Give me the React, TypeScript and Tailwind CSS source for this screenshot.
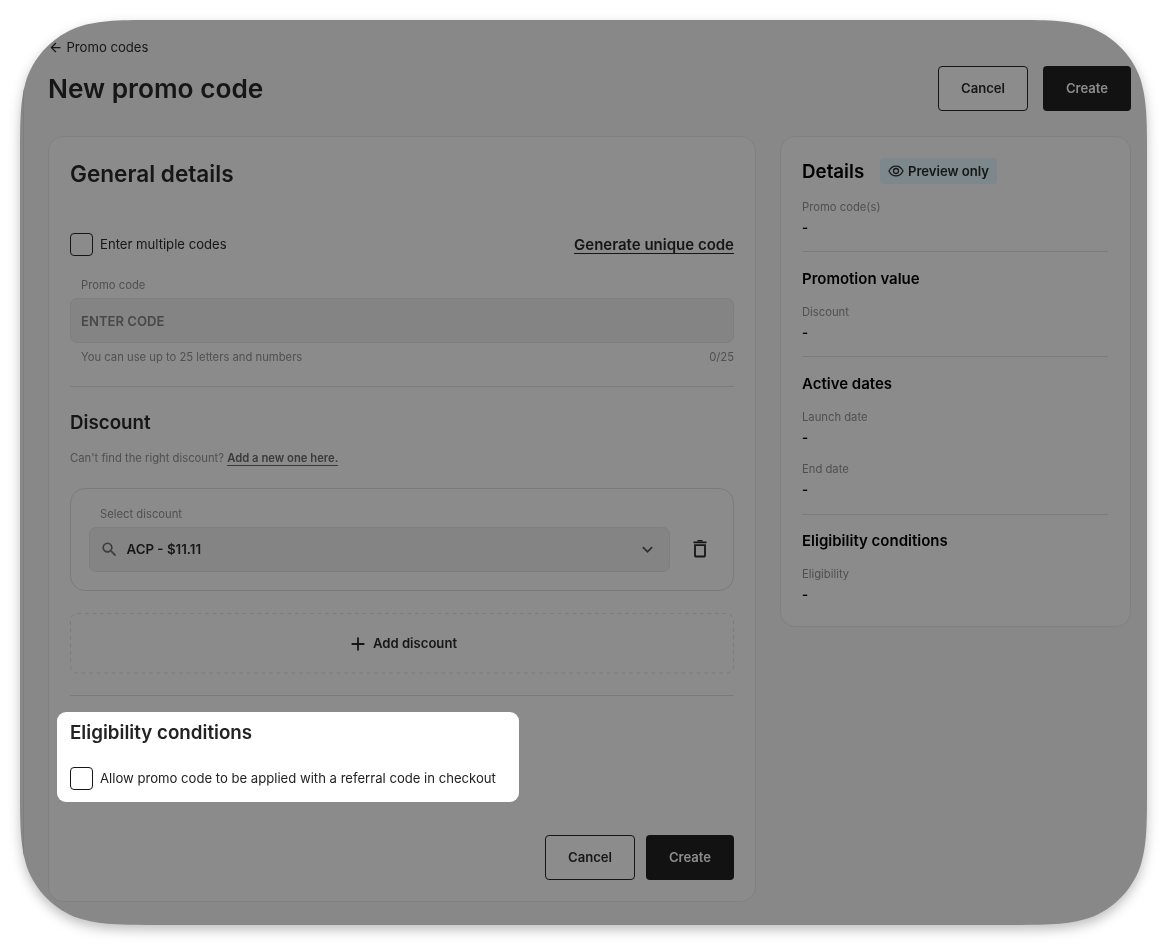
import type { ReactNode } from 'react';
import { MdAdd, MdArrowBack, MdExpandMore, MdSearch } from 'react-icons/md';

type Field = { label: string; value: string };
type Section = { title: string; fields: Field[] };

const sections: Section[] = [
  { title: 'Promotion value', fields: [{ label: 'Discount', value: '-' }] },
  { title: 'Active dates', fields: [{ label: 'Launch date', value: '-' }, { label: 'End date', value: '-' }] },
  { title: 'Eligibility conditions', fields: [{ label: 'Eligibility', value: '-' }] },
];

function EyeIcon() {
  return (
    <svg viewBox="0 0 16 12" className="h-3 w-4" fill="none" stroke="#1a1a1a" strokeWidth="1.3">
      <path d="M1 6C2.4 2.9 4.9 1.1 8 1.1s5.6 1.8 7 4.9c-1.4 3.1-3.9 4.9-7 4.9S2.4 9.1 1 6Z" />
      <circle cx="8" cy="6" r="2.5" />
    </svg>
  );
}

function TrashIcon() {
  return (
    <svg viewBox="0 0 14 18" className="mb-[2px] ml-[23px] h-[18px] w-[14px]" fill="none" stroke="#161616">
      <path d="M4.5 0.8h5" strokeWidth="1.4" />
      <path d="M0.5 2.3h13" strokeWidth="1.8" />
      <path d="M2 5.2h10v10.6a0.7 0.7 0 0 1-0.7 0.7H2.7A0.7 0.7 0 0 1 2 15.8Z" strokeWidth="1.8" />
    </svg>
  );
}

function Buttons({ className }: { className: string }) {
  return (
    <div className={`flex ${className}`}>
      <button className="h-[45px] w-[90px] rounded-[4px] border border-[#161616] bg-[#8c8c8c] text-[13.125px] font-semibold text-[#161616]">Cancel</button>
      <button className="h-[45px] w-[88px] rounded-[4px] bg-[#121212] text-[13.125px] font-semibold text-[#8c8c8c]">Create</button>
    </div>
  );
}

function Checkbox({ children }: { children: ReactNode }) {
  return (
    <label className="flex h-[23px] items-center gap-[7px] text-[13.125px] whitespace-nowrap">
      <span className="size-[23px] rounded-[4px] border border-[#161616]" />
      {children}
    </label>
  );
}

function FieldRow({ label, value }: Field) {
  return (
    <div className="h-[52.5px]">
      <div className="h-4 text-[11.25px] leading-4 text-[#505050]">{label}</div>
      <div className="mt-1 h-4 text-[13.125px] leading-4 font-semibold">{value}</div>
    </div>
  );
}

function PreviewCard() {
  return (
    <aside className="h-[491px] w-[351px] rounded-[15px] border border-[#808080] bg-[#8b8b8b] pr-[22px] pl-[21px] pt-[21px] text-black">
      <div className="flex h-[26px] items-center">
        <h2 className="w-[78px] pt-[2px] text-[18.75px] leading-6 font-semibold">Details</h2>
        <span className="flex h-[26px] w-[117px] items-center justify-center gap-1 rounded-[4px] bg-[#7c888b] text-[13.125px] font-semibold text-[#161616]">
          <EyeIcon />
          <span className="pt-px">Preview only</span>
        </span>
      </div>
      <div className="mt-[14.5px]">
        <FieldRow label="Promo code(s)" value="-" />
      </div>
      {sections.map((s) => (
        <section key={s.title} className="border-t border-[#7b7b7b] pt-[16.5px]">
          <h3 className="mb-[15px] h-5 text-[15px] leading-5 font-semibold">{s.title}</h3>
          {s.fields.map((f) => (
            <FieldRow key={f.label} {...f} />
          ))}
        </section>
      ))}
    </aside>
  );
}

function PromoForm() {
  return (
    <main className="h-[766px] w-[708px] rounded-[15px] border border-[#808080] bg-[#8b8b8b] px-[21px] pt-[22px]">
      <h2 className="h-[29px] text-[22.6px] leading-[29px] font-semibold">General details</h2>
      <div className="mt-[45px] flex items-center justify-between">
        <Checkbox>Enter multiple codes</Checkbox>
        <a className="border-b border-[#161616] text-[15px] leading-[17px] font-semibold">Generate unique code</a>
      </div>
      <div className="mt-[21px] pl-[11px] text-[11.25px] leading-4 text-[#505050]">Promo code</div>
      <div className="mt-[5px] flex h-[45px] items-center rounded-[7px] border border-[#7e7e7e] bg-[#848484] pt-[2px] pl-[10px] text-[13.125px] font-semibold text-[#484848]">ENTER CODE</div>
      <div className="mt-[6px] flex justify-between pl-[11px] text-[11.25px] leading-4 text-[#505050]">
        <span>You can use up to 25 letters and numbers</span>
        <span>0/25</span>
      </div>
      <hr className="mt-[21px] border-[#7b7b7b]" />
      <h3 className="mt-6 h-6 text-[18.75px] leading-6 font-semibold">Discount</h3>
      <p className="mt-[15px] text-[11.25px] leading-4 text-[#505050]">
        Can't find the right discount? <a className="border-b border-[#3a3a3a] font-semibold text-[#3a3a3a]">Add a new one here.</a>
      </p>
      <div className="mt-[22px] h-[103px] rounded-[15px] border border-[#7b7b7b] px-[18px] pt-[17px]">
        <div className="pl-[11px] text-[11.25px] leading-4 text-[#505050]">Select discount</div>
        <div className="mt-[5px] flex items-center">
          <div className="flex h-[45px] w-[581px] items-center rounded-[7px] border border-[#7e7e7e] bg-[#848484] pr-[11px] pl-[10px] text-[13.3px] font-semibold">
            <MdSearch className="mr-[7.5px] size-[19px] text-[#3c3c3c]" />
            <span className="pt-px">ACP - $11.11</span>
            <MdExpandMore className="ml-auto size-[21px] text-[#303030]" />
          </div>
          <TrashIcon />
        </div>
      </div>
      <button className="relative mt-[22px] flex h-[61px] w-full items-center justify-center gap-1 text-[13.125px] font-semibold">
        <svg className="absolute inset-0 size-full" fill="none">
          <rect x="0.5" y="0.5" width="663" height="59.5" rx="7" stroke="#7b7b7b" strokeDasharray="3.75 3.75" />
        </svg>
        <MdAdd className="size-[22px]" />
        Add discount
      </button>
      <hr className="mt-[21px] border-[#7b7b7b]" />
      <div className="mt-4 -ml-[13px] h-[90px] w-[462px] rounded-[9px] bg-white pt-[9px] pl-[13px] text-[#232323]">
        <h3 className="mb-[22px] h-6 text-[18.75px] leading-6 font-semibold">Eligibility conditions</h3>
        <Checkbox>Allow promo code to be applied with a referral code in checkout</Checkbox>
      </div>
      <Buttons className="mt-[33px] justify-end gap-[11px]" />
    </main>
  );
}

export default function App() {
  return (
    <div className="h-[945px] w-[1167px] overflow-hidden bg-white p-5 font-['Inter',sans-serif] text-[#161616]">
      <div className="drop-shadow-[0_5px_6px_rgba(0,0,0,0.25)]">
        <div className="h-[905px] w-[1127px] bg-[#888888] pl-[2.5px] [clip-path:path('M140.6_0H986.4C1026.9_0_1047.1_0_1068.9_6.9C1092.7_15.5_1111.5_34.3_1120.1_58.1C1127_79.9_1127_100.1_1127_140.6V764.4C1127_804.9_1127_825.1_1120.1_846.9C1111.5_870.7_1092.7_889.5_1068.9_898.1C1047.1_905_1026.9_905_986.4_905H140.6C100.1_905_79.9_905_58.1_898.1C34.3_889.5_15.5_870.7_6.9_846.9C0_825.1_0_804.9_0_764.4V140.6C0_100.1_0_79.9_6.9_58.1C15.5_34.3_34.3_15.5_58.1_6.9C79.9_0_100.1_0_140.6_0Z')]">
          <div className="h-full border-l border-[#7e7e7e] pt-[18px] pr-4 pl-[24.5px]">
            <a className="flex h-[18px] items-center gap-[3.5px] text-[13.125px]">
              <MdArrowBack className="size-[15px]" />
              <span className="pt-[1.5px]">Promo codes</span>
            </a>
            <header className="mt-[10px] flex h-[45px] items-center justify-between">
              <h1 className="text-[26.25px] font-semibold">New promo code</h1>
              <Buttons className="gap-[15px]" />
            </header>
            <div className="mt-[25px] flex items-start justify-between">
              <PromoForm />
              <PreviewCard />
            </div>
          </div>
        </div>
      </div>
    </div>
  );
}
